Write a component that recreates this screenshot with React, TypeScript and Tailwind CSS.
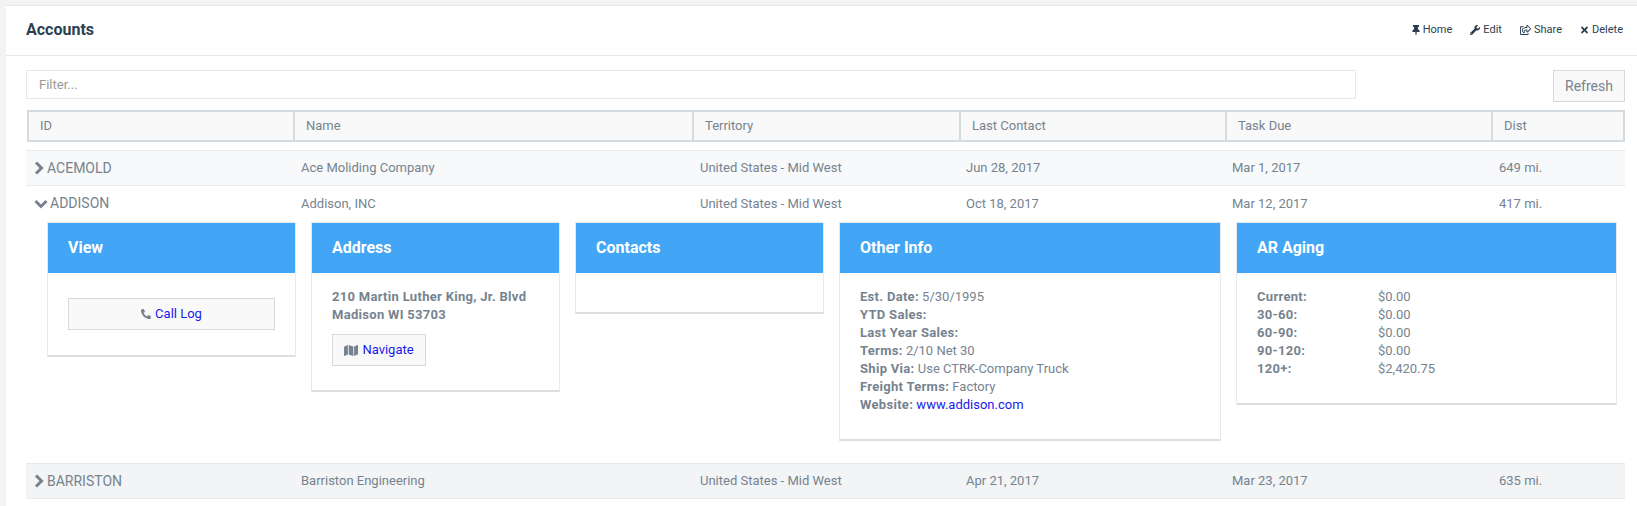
import { FaThumbtack, FaWrench, FaRegShareSquare, FaTimes, FaPhone, FaMap } from 'react-icons/fa';
import type { ReactNode } from 'react';

const HEAD_COLS = 'grid grid-cols-[264px_399px_267px_266px_266px_132px]';
const ROW_COLS = 'grid grid-cols-[267px_399px_266px_266px_267px_134px]';

const HEADERS = ['ID', 'Name', 'Territory', 'Last Contact', 'Task Due', 'Dist'];

const NAV = [
  { label: 'Home', icon: <FaThumbtack className="w-[8px] h-[10px]" /> },
  { label: 'Edit', icon: <FaWrench className="w-[10px] h-[10px]" /> },
  { label: 'Share', icon: <FaRegShareSquare className="w-[11px] h-[10px]" /> },
  { label: 'Delete', icon: <FaTimes className="w-[9px] h-[10px]" /> },
];

const AGING = [
  ['Current:', '$0.00'],
  ['30-60:', '$0.00'],
  ['60-90:', '$0.00'],
  ['90-120:', '$0.00'],
  ['120+:', '$2,420.75'],
];

function Chevron({ open }: { open?: boolean }) {
  // thick FA4 style chevron
  return open ? (
    <svg viewBox="0 0 14 10" className="w-[14px] h-[10px] mr-[2px]" fill="none" stroke="currentColor" strokeWidth="3">
      <path d="M1.5 2 L7 7.5 L12.5 2" />
    </svg>
  ) : (
    <svg viewBox="0 0 10 14" className="w-[10px] h-[14px] mr-[3px]" fill="none" stroke="currentColor" strokeWidth="3">
      <path d="M2 1.5 L7.5 7 L2 12.5" />
    </svg>
  );
}

function Row({ id, open, cells, className }: { id: string; open?: boolean; cells: string[]; className?: string }) {
  return (
    <div className={`${ROW_COLS} items-center border-b border-[#e7eaec] text-[13px] ${className ?? ''}`}>
      <div className="flex items-center pl-[8px] text-[14px]">
        <Chevron open={open} />
        <span>{id}</span>
      </div>
      {cells.map((c) => (
        <div key={c} className="pl-[8px]">{c}</div>
      ))}
    </div>
  );
}

function Card({ title, width, pb, children }: { title: string; width: string; pb: string; children?: ReactNode }) {
  return (
    <div className={`${width} self-start bg-white border border-[#e7eaec] border-b-2 border-b-[#dcdfe2]`}>
      <div className="h-[50px] bg-[#42a5f5] text-white text-[16px] font-bold flex items-center px-[20px]">{title}</div>
      <div className={`px-[20px] pt-[15px] ${pb} text-[13px] leading-[18px] min-h-[39px]`}>{children}</div>
    </div>
  );
}

function Label({ children }: { children: ReactNode }) {
  return <b className="font-bold tracking-[0.3px]">{children}</b>;
}

export default function App() {
  return (
    <div className="h-[506px] overflow-hidden bg-[#f3f3f4] pl-[6px] pt-[5px] font-['Roboto',sans-serif] text-[14px] text-[#76838f]">
      <div className="bg-white h-[501px] border-t border-[#e7eaec]">
        {/* Title bar */}
        <div className="h-[50px] flex items-center justify-between pl-[20px] pr-[14px] border-b border-[#e7eaec]">
          <h1 className="text-[16px] font-bold text-[#2c3e50] -mt-[2px]">Accounts</h1>
          <div className="flex items-center gap-[18px] text-[11px] text-[#2c3e50] -mt-[1px]">
            {NAV.map((n) => (
              <div key={n.label} className="flex items-center gap-[3px]">
                {n.icon}
                <span>{n.label}</span>
              </div>
            ))}
          </div>
        </div>

        <div className="pl-[20px] pr-[12px]">
          {/* Filter */}
          <div className="flex justify-between items-start pt-[14px]">
            <input
              placeholder="Filter..."
              className="w-[1330px] h-[29px] border border-[#e7eaec] px-[12px] text-[13px] placeholder:text-[#999] outline-none"
            />
            <button className="w-[72px] h-[32px] bg-[#f9f9f9] border border-[#d3dae0] text-[#76838f]">Refresh</button>
          </div>

          {/* Table head */}
          <div className={`${HEAD_COLS} ml-[1px] mt-[8px] h-[32px] border-2 border-[#d3dae0] bg-[#f9f9f9] w-[1598px] text-[13px]`}>
            {HEADERS.map((h, i) => (
              <div key={h} className={`flex items-center pl-[11px] ${i > 0 ? 'border-l-2 border-[#d3dae0]' : ''}`}>{h}</div>
            ))}
          </div>

          {/* Rows */}
          <div className="mt-[8px] border-t border-[#e7eaec]">
            <Row id="ACEMOLD" className="h-[35px] bg-[#f8f9fa]" cells={['Ace Moliding Company', 'United States - Mid West', 'Jun 28, 2017', 'Mar 1, 2017', '649 mi.']} />
            <Row id="ADDISON" open className="h-[35px] border-b-0" cells={['Addison, INC', 'United States - Mid West', 'Oct 18, 2017', 'Mar 12, 2017', '417 mi.']} />

            <div className="h-[242px] flex gap-[15px] pl-[21px] pt-[1px]">
              <Card title="View" width="w-[249px]" pb="pb-[25px]">
                <div className="pt-[10px]">
                  <button className="w-[207px] h-[32px] flex items-center justify-center gap-[4px] bg-[#f9f9f9] border border-[#d3dae0] text-[#1a1aee] text-[13px]">
                    <FaPhone className="w-[10px] h-[10px] text-[#76838f] -scale-x-100" />
                    Call Log
                  </button>
                </div>
              </Card>
              <Card title="Address" width="w-[249px]" pb="pb-[24px]">
                <div><Label>210 Martin Luther King, Jr. Blvd</Label></div>
                <div><Label>Madison WI 53703</Label></div>
                <button className="mt-[10px] w-[94px] h-[32px] flex items-center justify-center gap-[4px] bg-[#f9f9f9] border border-[#d3dae0] text-[#1a1aee] text-[13px]">
                  <FaMap className="w-[14px] h-[13px] text-[#76838f]" />
                  Navigate
                </button>
              </Card>
              <Card title="Contacts" width="w-[249px]" pb="pb-[12px]" />
              <Card title="Other Info" width="w-[382px]" pb="pb-[25px]">
                <div><Label>Est. Date:</Label> 5/30/1995</div>
                <div><Label>YTD Sales:</Label></div>
                <div><Label>Last Year Sales:</Label></div>
                <div><Label>Terms:</Label> 2/10 Net 30</div>
                <div><Label>Ship Via:</Label> Use CTRK-Company Truck</div>
                <div><Label>Freight Terms:</Label> Factory</div>
                <div><Label>Website:</Label> <span className="text-[#1a1aee]">www.addison.com</span></div>
              </Card>
              <Card title="AR Aging" width="w-[381px]" pb="pb-[25px]">
                {AGING.map(([k, v]) => (
                  <div key={k} className="grid grid-cols-[121px_1fr]">
                    <Label>{k}</Label>
                    <span>{v}</span>
                  </div>
                ))}
              </Card>
            </div>

            <Row id="BARRISTON" className="h-[36px] bg-[#f2f4f6] border-t" cells={['Barriston Engineering', 'United States - Mid West', 'Apr 21, 2017', 'Mar 23, 2017', '635 mi.']} />
          </div>
        </div>
      </div>
    </div>
  );
}
